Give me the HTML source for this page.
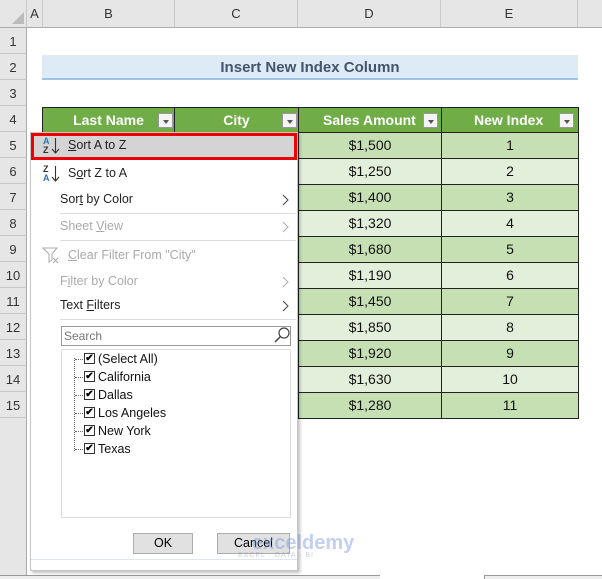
<!DOCTYPE html>
<html><head><meta charset="utf-8"><style>
*{margin:0;padding:0;box-sizing:border-box}
body{width:602px;height:579px;overflow:hidden;background:#fff;font-family:"Liberation Sans",sans-serif;position:relative;font-size:13px}
.a{position:absolute}
.ch{background:#e6e6e6;border-right:1px solid #c8c8c8;border-bottom:1px solid #ababab;top:0;height:28px;text-align:center;line-height:28px;color:#333;font-size:13px}
.rh{background:#e6e6e6;border-bottom:1px solid #c8c8c8;border-right:1px solid #ababab;left:0;width:27px;height:26px;text-align:center;line-height:28px;color:#333;font-size:13px}
.cell{border:1px solid #222;text-align:center;line-height:25px;font-size:14px;color:#111}
.hd{background:#70ad47;color:#fff;font-weight:bold;font-size:14px;border:1px solid #222;text-align:center;line-height:24px}
.dd{width:15px;height:15px;background:#f4f4f4;border:1px solid #999;top:5px}
.dd:after{content:"";position:absolute;left:4px;top:6px;border-left:3px solid transparent;border-right:3px solid transparent;border-top:4px solid #555}
.mi{left:60px;font-size:12.5px;color:#222}
.dis{color:#aaa}
.arr{left:281px}
.sep{left:60px;width:236px;height:1px;background:#ddd}
.it{font-size:12.5px;color:#111}
.cb{width:11px;height:11px;border:1px solid #333;background:#fff;font-size:10px;line-height:9px;text-align:center;font-weight:bold}
</style></head><body>
<div class="a ch" style="left:0;width:27px"></div>
<div class="a" style="left:12px;top:12px;border-left:12px solid transparent;border-bottom:12px solid #bbb"></div>
<div class="a ch" style="left:27px;width:16px">A</div>
<div class="a ch" style="left:43px;width:132px">B</div>
<div class="a ch" style="left:175px;width:123px">C</div>
<div class="a ch" style="left:298px;width:143px">D</div>
<div class="a ch" style="left:441px;width:137px">E</div>
<div class="a ch" style="left:578px;width:30px"></div>

<div class="a rh" style="top:28px">1</div>
<div class="a rh" style="top:54px">2</div>
<div class="a rh" style="top:80px">3</div>
<div class="a rh" style="top:106px">4</div>
<div class="a rh" style="top:132px">5</div>
<div class="a rh" style="top:158px">6</div>
<div class="a rh" style="top:184px">7</div>
<div class="a rh" style="top:210px">8</div>
<div class="a rh" style="top:236px">9</div>
<div class="a rh" style="top:262px">10</div>
<div class="a rh" style="top:288px">11</div>
<div class="a rh" style="top:314px">12</div>
<div class="a rh" style="top:340px">13</div>
<div class="a rh" style="top:366px">14</div>
<div class="a rh" style="top:392px">15</div>
<div class="a" style="left:0;top:418px;width:27px;height:161px;background:#e6e6e6;border-right:1px solid #ababab"></div>
<div class="a" style="left:0;top:575px;width:380px;height:4px;border-top:1px solid #999;background:#eee"></div>
<div class="a" style="left:484px;top:575px;width:118px;height:4px;border-top:1px solid #999;border-left:1px solid #999;background:#eee"></div>

<div class="a" style="left:42px;top:55px;width:536px;height:25px;background:#ddebf7;border-bottom:2px solid #9dc3e6;text-align:center;line-height:25px;font-weight:bold;font-size:15px;color:#44546a">Insert New Index Column</div>

<div class="a hd" style="left:42px;top:107px;width:133px;height:26px">Last Name</div>
<div class="a dd" style="left:158px;top:113px"></div>
<div class="a hd" style="left:174px;top:107px;width:125px;height:26px">City</div>
<div class="a dd" style="left:282px;top:113px"></div>
<div class="a hd" style="left:298px;top:107px;width:144px;height:26px;text-align:left;padding-left:24px">Sales Amount</div>
<div class="a dd" style="left:423px;top:113px"></div>
<div class="a hd" style="left:441px;top:107px;width:138px;height:26px;text-align:left;padding-left:32px">New Index</div>
<div class="a dd" style="left:559px;top:113px"></div>

<div id="rows"></div>
<script>
var d=["$1,500","$1,250","$1,400","$1,320","$1,680","$1,190","$1,450","$1,850","$1,920","$1,630","$1,280"],h="";
for(var i=0;i<11;i++){var t=132+i*26,c=i%2?"#e2efda":"#c6e0b4";
h+='<div class="a cell" style="left:298px;top:'+t+'px;width:144px;height:27px;background:'+c+'">'+d[i]+'</div>';
h+='<div class="a cell" style="left:441px;top:'+t+'px;width:138px;height:27px;background:'+c+'">'+(i+1)+'</div>';}
document.getElementById("rows").innerHTML=h;
</script>

<div class="a" style="left:30px;top:132px;width:268px;height:439px;background:#fff;border:1px solid #c6c6c6;box-shadow:2px 2px 3px rgba(0,0,0,.25)"></div>
<div class="a" style="left:31px;top:133px;width:266px;height:27px;background:#d4d4d4;border:3px solid #e00"></div>
<div class="a" style="left:43px;top:137px;font-size:9px;line-height:9px;color:#2e75b6;font-weight:bold">A<br><span style="color:#333">Z</span></div>
<svg class="a" style="left:51px;top:137px" width="9" height="18"><path d="M4.5 1v15M1 12l3.5 4 3.5-4" fill="none" stroke="#333" stroke-width="1.1"/></svg>
<div class="a mi" style="left:68px;top:138px"><u>S</u>ort A to Z</div>
<div class="a" style="left:43px;top:165px;font-size:9px;line-height:9px;color:#333;font-weight:bold">Z<br><span style="color:#2e75b6">A</span></div>
<svg class="a" style="left:51px;top:165px" width="9" height="18"><path d="M4.5 1v15M1 12l3.5 4 3.5-4" fill="none" stroke="#333" stroke-width="1.1"/></svg>
<div class="a mi" style="left:68px;top:166px">S<u>o</u>rt Z to A</div>
<div class="a mi" style="top:192px">Sor<u>t</u> by Color</div>
<svg class="a arr" style="top:194px" width="8" height="12"><path d="M2 1l5 5-5 5" fill="none" stroke="#444"/></svg>
<div class="a sep" style="top:213px"></div>
<div class="a mi dis" style="top:219px">Sheet <u>V</u>iew</div>
<svg class="a arr" style="top:221px" width="8" height="12"><path d="M2 1l5 5-5 5" fill="none" stroke="#aaa"/></svg>
<div class="a sep" style="top:240px"></div>
<svg class="a" style="left:42px;top:246px" width="18" height="18"><path d="M1 2h14l-5 6v6l-3 2V8z" fill="none" stroke="#aaa"/><path d="M11 12l5 5M16 12l-5 5" stroke="#aaa"/></svg>
<div class="a mi dis" style="left:68px;top:248px"><u>C</u>lear Filter From "City"</div>
<div class="a mi dis" style="top:274px">F<u>i</u>lter by Color</div>
<svg class="a arr" style="top:276px" width="8" height="12"><path d="M2 1l5 5-5 5" fill="none" stroke="#aaa"/></svg>
<div class="a mi" style="top:298px">Text <u>F</u>ilters</div>
<svg class="a arr" style="top:300px" width="8" height="12"><path d="M2 1l5 5-5 5" fill="none" stroke="#444"/></svg>
<div class="a sep" style="top:319px"></div>
<div class="a" style="left:61px;top:326px;width:230px;height:20px;border:1px solid #999;font-size:12px;color:#777;padding-left:2px;line-height:18px">Search</div>
<svg class="a" style="left:274px;top:327px" width="16" height="17"><circle cx="10" cy="6" r="5" fill="none" stroke="#444" stroke-width="1.2"/><path d="M6.5 9.5L1 15" stroke="#444" stroke-width="1.5"/></svg>
<div class="a" style="left:61px;top:349px;width:230px;height:169px;border:1px solid #ddd"></div>
<div class="a" style="left:74px;top:358px;width:1px;height:93px;border-left:1px dotted #666"></div>
<div id="lst"></div>
<script>
var n=["(Select All)","California","Dallas","Los Angeles","New York","Texas"],s="";
for(var i=0;i<6;i++){var t=352+i*18;
s+='<div class="a" style="left:75px;top:'+(t+7)+'px;width:8px;border-top:1px dotted #666"></div>';
s+='<div class="a cb" style="left:84px;top:'+(t+1)+'px">✔</div>';
s+='<div class="a it" style="left:98px;top:'+t+'px">'+n[i]+'</div>';}
document.getElementById("lst").innerHTML=s;
</script>
<div class="a" style="left:133px;top:533px;width:60px;height:21px;background:#e1e1e1;border:1px solid #adadad;text-align:center;line-height:19px;font-size:12.5px">OK</div>
<div class="a" style="left:217px;top:533px;width:73px;height:21px;background:#e1e1e1;border:1px solid #adadad;text-align:center;line-height:19px;font-size:12.5px">Cancel</div>
<div class="a" style="left:31px;top:559px;width:266px;height:1px;background:#dde6f0"></div>
<div class="a" style="left:252px;top:532px;font-size:20px;font-weight:bold;color:rgba(120,150,220,.45)">exceldemy</div>
<div class="a" style="left:238px;top:552px;font-size:7px;color:rgba(150,160,190,.5);letter-spacing:1px">EXCEL · DATA · BI</div>
</body></html>
